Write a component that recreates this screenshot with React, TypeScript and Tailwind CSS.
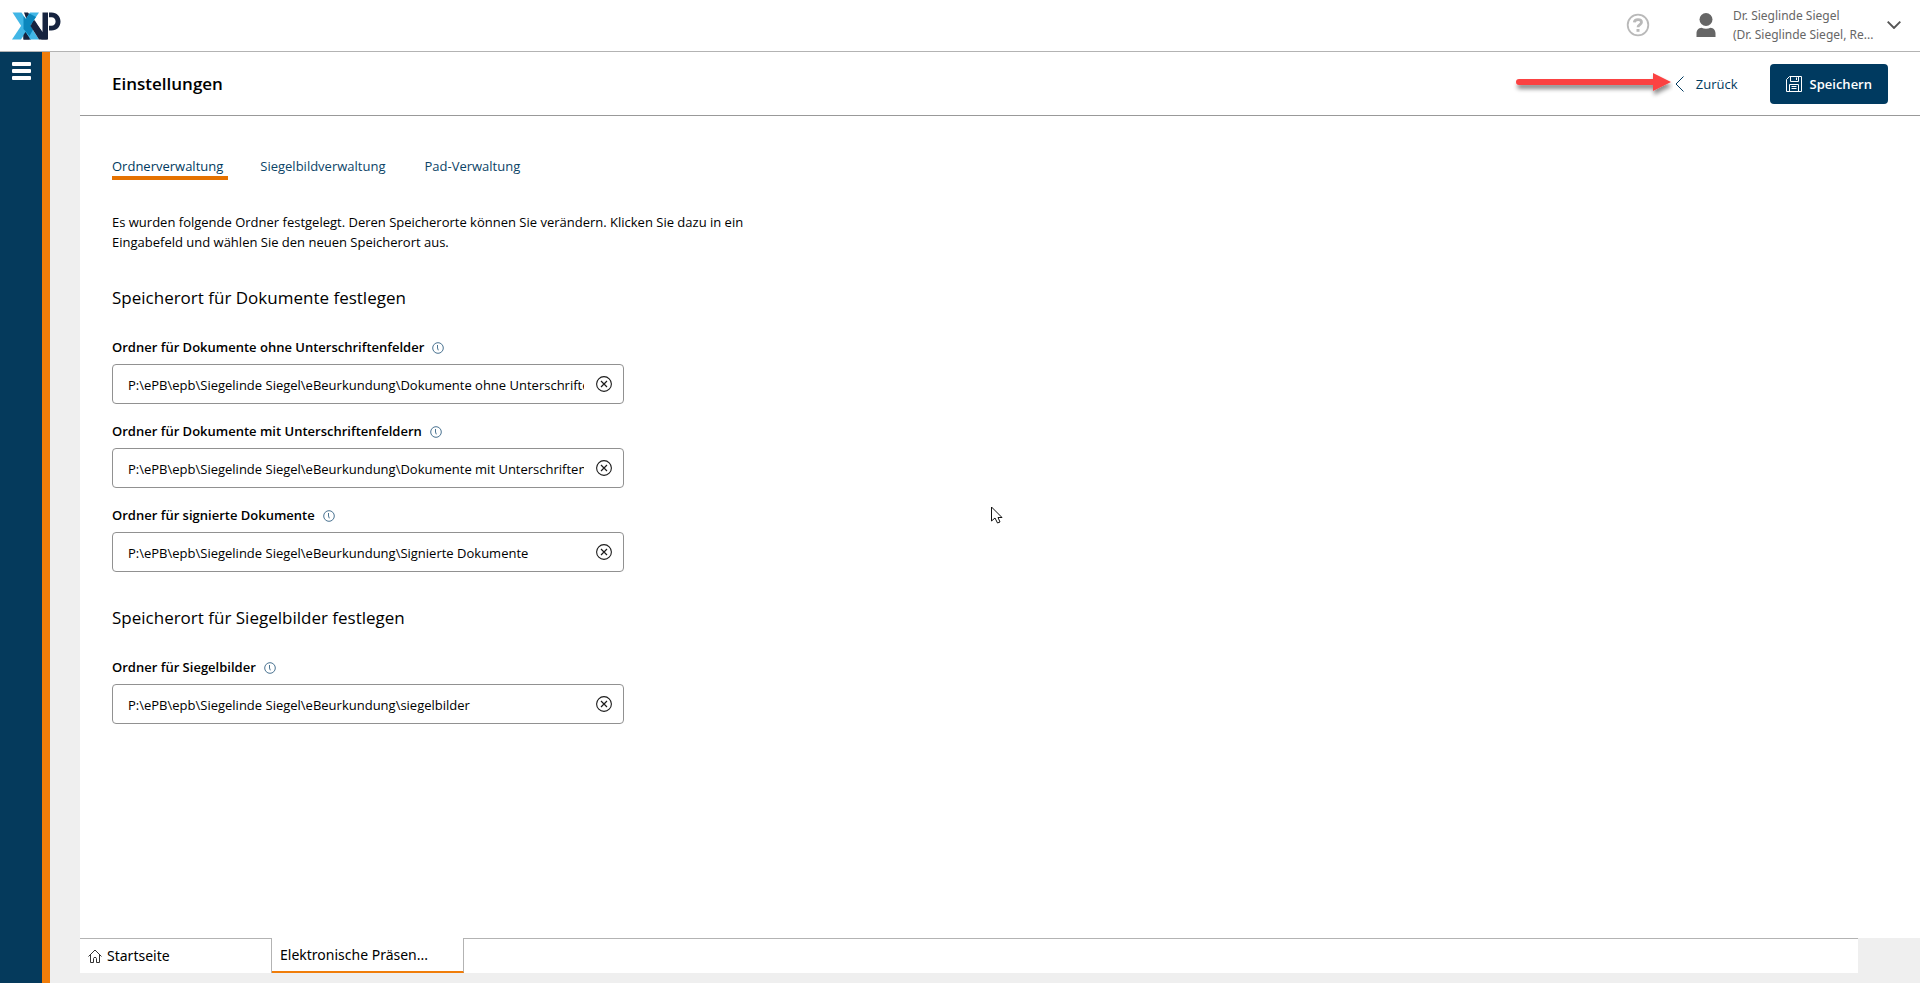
import React, { useState } from "react";

type FolderField = { id: string; label: string; path: string };

const documentFolders: FolderField[] = [
  {
    id: "folder-unsigned",
    label: "Ordner für Dokumente ohne Unterschriftenfelder",
    path: "P:\\ePB\\epb\\Siegelinde Siegel\\eBeurkundung\\Dokumente ohne Unterschriftenfelder",
  },
  {
    id: "folder-fields",
    label: "Ordner für Dokumente mit Unterschriftenfeldern",
    path: "P:\\ePB\\epb\\Siegelinde Siegel\\eBeurkundung\\Dokumente mit Unterschriftenfeldern",
  },
  {
    id: "folder-signed",
    label: "Ordner für signierte Dokumente",
    path: "P:\\ePB\\epb\\Siegelinde Siegel\\eBeurkundung\\Signierte Dokumente",
  },
];

const sealFolders: FolderField[] = [
  {
    id: "folder-seals",
    label: "Ordner für Siegelbilder",
    path: "P:\\ePB\\epb\\Siegelinde Siegel\\eBeurkundung\\siegelbilder",
  },
];

function Logo() {
  return (
    <svg viewBox="0 0 50 28" className="h-7 w-[50px]" aria-hidden="true">
      <path d="M13 0.500H17L31.500 20V0.500H37V27.500H30.500L20 12V27.500H12.500V22L15 18V6Z" fill="#16233f" />
      <path d="M38 0.500H40.500C46 0.500 49.500 4.500 49.500 9.500S46 18.500 40.500 18.500H38V13.700H40.500C43 13.700 44.600 12 44.600 9.500S43 5.300 40.500 5.300H38Z" fill="#16233f" />
      <path d="M1.500 0.500H10.500L28 27.500H19Z" fill="#41b6e6" />
      <path d="M19 0.500H28L10 27.500H1Z" fill="#41b6e6" />
      <path d="M12.500 4L15 7L18.500 1.500L25 5L19.500 13L22 17.500L18.500 24L12.500 17Z" fill="#0b86bd" />
      <path d="M19.500 14L23.500 8L36 27.500H28Z" fill="#16233f" />
      <path d="M14.500 20L18.500 26V27.500H12.500V23Z" fill="#16233f" />
    </svg>
  );
}

function HelpIcon() {
  return (
    <svg viewBox="0 0 24 24" className="size-6" fill="none" stroke="#b9b9b9" aria-hidden="true">
      <circle cx="12" cy="12" r="10.300" strokeWidth="1.800" />
      <path d="M8.300 9.400C8.500 7.400 10 6.600 12 6.600C14.100 6.600 15.500 7.700 15.500 9.200C15.500 11.600 12 11.500 12 14.300" strokeWidth="2.800" />
      <path d="M12 16V18.800" strokeWidth="3" />
    </svg>
  );
}

function UserIcon() {
  return (
    <svg viewBox="0 0 20 24" className="h-6 w-5" fill="#666" aria-hidden="true">
      <circle cx="10" cy="6.500" r="6.500" />
      <path d="M0.500 24V20.500C0.500 17.200 2.500 15 5.500 14.800C8.300 16 11.700 16 14.500 14.800C17.500 15 19.500 17.200 19.500 20.500V24Z" />
    </svg>
  );
}

function SaveIcon() {
  return (
    <svg viewBox="0 0 16 16" className="size-4" fill="none" stroke="#fff" aria-hidden="true">
      <path d="M3.500 0.500H15.500V15.500H0.500V3.500Z" />
      <path d="M4.500 0.500V5.500H12.500V0.500M10.500 1.500V4M3.500 15.500V8.500H12.500V15.500M5.500 10.500H10.500M5.500 12.500H10.500" />
    </svg>
  );
}

function InfoIcon() {
  return (
    <svg viewBox="0 0 12 12" className="size-3" fill="none" stroke="#4a7391" aria-hidden="true">
      <circle cx="6" cy="6" r="5.300" />
      <path d="M5.500 3V6L6.300 8.300" />
    </svg>
  );
}

function ClearIcon() {
  return (
    <svg viewBox="0 0 16 16" className="size-4" fill="none" stroke="#1c1c1c" aria-hidden="true">
      <circle cx="8" cy="8" r="7.400" strokeWidth="1.100" />
      <path d="M5 5L11 11M11 5L5 11" strokeWidth="1.200" />
    </svg>
  );
}

function Field({ field }: { field: FolderField }) {
  const [value, setValue] = useState(field.path);
  return (
    <div>
      <div className="flex h-5 items-center gap-2">
        <label htmlFor={field.id} className="text-[13px] leading-5 font-semibold">
          {field.label}
        </label>
        <button type="button" aria-label="Information" className="mt-0.5">
          <InfoIcon />
        </button>
      </div>
      <div className="mt-[7px] flex h-10 items-center rounded border border-[#919191] pr-[11px] pl-[15px]">
        <input
          id={field.id}
          value={value}
          onChange={(e) => setValue(e.target.value)}
          className="mt-0.5 min-w-0 flex-1 bg-transparent text-[13px] leading-5 outline-none"
        />
        <button type="button" aria-label="Eingabe löschen" className="ml-3" onClick={() => setValue("")}>
          <ClearIcon />
        </button>
      </div>
    </div>
  );
}

function FolderSection({ title, fields }: { title: string; fields: FolderField[] }) {
  return (
    <section className="flex max-w-[512px] flex-col">
      <h2 className="text-[17px] leading-6">{title}</h2>
      <div className="mt-[27px] flex flex-col gap-[17px]">
        {fields.map((f) => (
          <Field key={f.id} field={f} />
        ))}
      </div>
    </section>
  );
}

export default function App() {
  return (
    <div className="flex min-h-screen flex-col bg-white font-['Open_Sans','Noto_Sans',sans-serif] text-black">
      <header className="flex h-[52px] items-center border-b border-[#b3b3b3] pr-[19px] pl-[11px]">
        <a href="#" aria-label="XNP">
          <Logo />
        </a>
        <div className="ml-auto flex items-center pb-0.5">
          <button type="button" aria-label="Hilfe">
            <HelpIcon />
          </button>
          <button type="button" className="ml-[46px] flex items-center text-left">
            <UserIcon />
            <span className="ml-[17px] w-[142px] font-['Noto_Sans',sans-serif] text-xs leading-[19px] text-[#666]">
              <span className="block">Dr. Sieglinde Siegel</span>
              <span className="block whitespace-nowrap">(Dr. Sieglinde Siegel, Re...</span>
            </span>
            <svg viewBox="0 0 14 8" className="ml-3 h-2 w-3.5" fill="none" stroke="#555" strokeWidth="1.900" aria-hidden="true">
              <path d="M0.700 0.700L7 7L13.300 0.700" />
            </svg>
          </button>
        </div>
      </header>

      <div className="flex flex-1">
        <nav className="w-[50px] border-r-8 border-[#f07d0a] bg-[#053a5c]">
          <button type="button" aria-label="Menü" className="mt-2.5 ml-3 flex flex-col gap-[3px]">
            <span className="h-1 w-[19px] rounded-[1px] bg-white" />
            <span className="h-1 w-[19px] rounded-[1px] bg-white" />
            <span className="h-1 w-[19px] rounded-[1px] bg-white" />
          </button>
        </nav>

        <div className="flex flex-1 flex-col bg-[#efefef] pb-2.5">
          <main className="ml-[30px] flex-1 bg-white">
            <div className="flex h-16 items-center border-b border-[#999] px-8">
              <h1 className="text-[17px] leading-6 font-semibold">Einstellungen</h1>
              <div className="ml-auto flex items-center">
                <svg viewBox="0 0 160 30" className="mt-1 h-[30px] w-40" aria-hidden="true">
                  <defs>
                    <filter id="arrow-shadow" x="-10%" y="-30%" width="120%" height="200%">
                      <feDropShadow dx="1" dy="4" stdDeviation="2" floodColor="#000" floodOpacity="0.450" />
                    </filter>
                  </defs>
                  <path
                    d="M6 8H140V2L158 11L140 20V14H6A3 3 0 0 1 6 8Z"
                    fill="#fb4343"
                    filter="url(#arrow-shadow)"
                  />
                </svg>
                <a href="#" className="ml-0.5 flex items-center gap-3 text-[13px] leading-5 text-[#003a60]">
                  <svg viewBox="0 0 9 16" className="h-4 w-[9px]" fill="none" stroke="#003a60" aria-hidden="true">
                    <path d="M8.500 0.500L1 8L8.500 15.500" />
                  </svg>
                  Zurück
                </a>
                <button
                  type="button"
                  className="ml-8 flex h-10 items-center gap-2 rounded bg-[#003a60] px-4 text-[13px] leading-5 font-semibold text-white"
                >
                  <SaveIcon />
                  Speichern
                </button>
              </div>
            </div>

            <div className="px-8 pt-10">
              <div role="tablist" className="flex gap-8 text-[13px] leading-5 text-[#0c4467]">
                <button type="button" role="tab" aria-selected="true" className="border-b-4 border-[#e57200] pr-[5px] text-[#003a60]">
                  Ordnerverwaltung
                </button>
                <button type="button" role="tab" aria-selected="false" className="border-b-4 border-transparent pr-[7px]">
                  Siegelbildverwaltung
                </button>
                <button type="button" role="tab" aria-selected="false" className="border-b-4 border-transparent pr-[7px]">
                  Pad-Verwaltung
                </button>
              </div>

              <p className="mt-8 max-w-[660px] text-[13px] leading-5">
                Es wurden folgende Ordner festgelegt. Deren Speicherorte können Sie verändern. Klicken Sie dazu in ein
                Eingabefeld und wählen Sie den neuen Speicherort aus.
              </p>

              <div className="mt-[34px] flex flex-col gap-[34px]">
                <FolderSection title="Speicherort für Dokumente festlegen" fields={documentFolders} />
                <FolderSection title="Speicherort für Siegelbilder festlegen" fields={sealFolders} />
              </div>
            </div>
          </main>

          <footer className="mr-[62px] ml-[30px] flex h-[35px] bg-white font-['Noto_Sans',sans-serif] text-sm">
            <button type="button" className="flex w-48 items-center gap-[5px] border-t border-r border-[#b3b3b3] pl-2">
              <svg viewBox="0 0 14 14" className="size-3.5" fill="none" stroke="#333" aria-hidden="true">
                <path d="M0.500 7.500L7 1L13.500 7.500M2.500 6V13.500H5.500V9.500C5.500 8 8.500 8 8.500 9.500V13.500H11.500V6" />
              </svg>
              Startseite
            </button>
            <button type="button" className="w-48 border-r border-b-2 border-r-[#b3b3b3] border-b-[#f07d0a] pl-2 text-left">
              Elektronische Präsen...
            </button>
            <div className="flex-1 border-t border-[#b3b3b3]" />
          </footer>
        </div>
      </div>

      <svg viewBox="0 0 12 18" className="pointer-events-none absolute top-[506px] left-[991px] h-[18px] w-3" fill="#fff" stroke="#111" aria-hidden="true">
        <path d="M0.500 1V15L4 12L6.500 17L9 16L7 11.500H11Z" />
      </svg>
    </div>
  );
}
